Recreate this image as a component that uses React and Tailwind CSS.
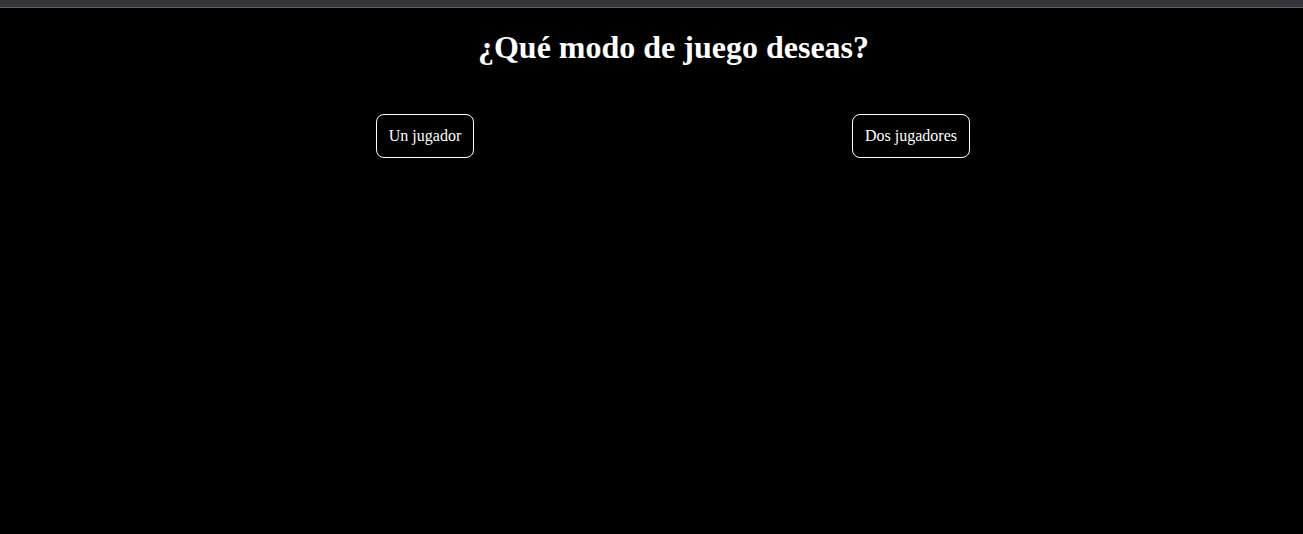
import React from 'react';

const App = () => {
  return (
    <div className="min-h-screen bg-black text-white" style={{ fontFamily: '"Liberation Serif", "Times New Roman", serif' }}>
      {/* browser chrome strip */}
      <div className="h-[7px] bg-[#35363a]" />
      <div className="h-px bg-[#5f6065]" />

      <h1 className="mt-[21px] mb-0 pl-[44px] text-center text-[32px] font-bold leading-[37px]">
        ¿Qué modo de juego deseas?
      </h1>

      <div className="ml-[182px] mt-[48px] grid w-[972px] grid-cols-2 justify-items-center">
        <button className="h-[44px] rounded-lg border border-white bg-black px-3 text-[16px] text-white">
          Un jugador
        </button>
        <button className="h-[44px] rounded-lg border border-white bg-black px-3 text-[16px] text-white">
          Dos jugadores
        </button>
      </div>
    </div>
  );
};

export default App;
